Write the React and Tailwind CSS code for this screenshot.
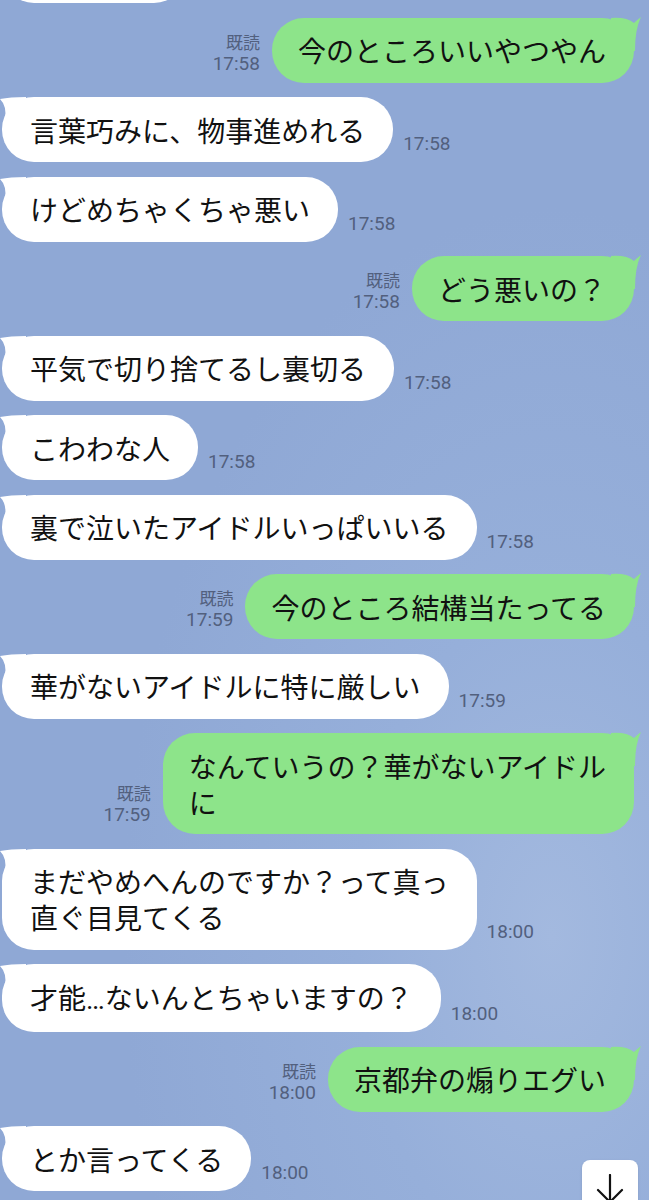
const messages = [
  { side: "in", lines: [""], time: "", cut: true },
  { side: "out", lines: ["今のところいいやつやん"], time: "17:58" },
  { side: "in", lines: ["言葉巧みに、物事進めれる"], time: "17:58" },
  { side: "in", lines: ["けどめちゃくちゃ悪い"], time: "17:58" },
  { side: "out", lines: ["どう悪いの？"], time: "17:58" },
  { side: "in", lines: ["平気で切り捨てるし裏切る"], time: "17:58" },
  { side: "in", lines: ["こわわな人"], time: "17:58" },
  { side: "in", lines: ["裏で泣いたアイドルいっぱいいる"], time: "17:58" },
  { side: "out", lines: ["今のところ結構当たってる"], time: "17:59" },
  { side: "in", lines: ["華がないアイドルに特に厳しい"], time: "17:59" },
  { side: "out", lines: ["なんていうの？華がないアイドル", "に"], time: "17:59" },
  { side: "in", lines: ["まだやめへんのですか？って真っ", "直ぐ目見てくる"], time: "18:00" },
  { side: "in", lines: ["才能", "…", "ないんとちゃいますの？"], inline: true, time: "18:00" },
  { side: "out", lines: ["京都弁の煽りエグい"], time: "18:00" },
  { side: "in", lines: ["とか言ってくる"], time: "18:00" },
];

const jp = "font-['Noto_Sans_CJK_JP',sans-serif]";

function BubbleText({ msg }) {
  if (msg.inline) {
    // iOS draws the ellipsis on the baseline, so give it a latin font
    return (
      <p className={`${jp} text-[28px] leading-[36px] text-[#111] whitespace-nowrap`}>
        {msg.lines[0]}
        <span className="font-['Roboto',sans-serif]">{msg.lines[1]}</span>
        {msg.lines[2]}
      </p>
    );
  }
  return (
    <p className={`${jp} text-[28px] leading-[36px] text-[#111] whitespace-nowrap`}>
      {msg.lines.map((l, i) => (
        <span key={i} className="block">{l}</span>
      ))}
    </p>
  );
}

function Incoming({ msg }) {
  if (msg.cut) {
    return (
      <div className="-mt-[62px] ml-[2px] h-[65px] w-[184px] rounded-[32px] bg-white" />
    );
  }
  return (
    <div className="flex items-end gap-[10px]">
      <div className="relative ml-[2px] rounded-[32px] bg-white px-[28px] py-[14.5px]">
        <svg className="absolute -left-[2px] top-0" width="26" height="30" viewBox="0 0 26 30">
          <path d="M26 0 Q10 0 0 2 Q7 9 5 22 L26 30 Z" fill="#fff" />
        </svg>
        <div className="relative">
          <BubbleText msg={msg} />
        </div>
      </div>
      <span className="mb-[7px] font-['Roboto',sans-serif] text-[19px] leading-[22px] text-[#52607e]">
        {msg.time}
      </span>
    </div>
  );
}

function Outgoing({ msg }) {
  return (
    <div className="flex items-end justify-end gap-[12px] pr-[15px]">
      <div className="mb-[8px] flex flex-col items-end leading-[22px] text-[#52607e]">
        <span className={`${jp} text-[17px]`}>既読</span>
        <span className="font-['Roboto',sans-serif] text-[19px]">{msg.time}</span>
      </div>
      <div className="relative rounded-[32px] bg-[#8de48a] pl-[26px] pr-[28px] py-[14.5px]">
        <svg className="absolute -right-[7px] -top-[1px]" width="30" height="34" viewBox="0 0 30 34">
          <path d="M0 1 Q16 0 23 6 Q26 3 30 0 Q24 12 24 34 L0 34 Z" fill="#8de48a" />
        </svg>
        <div className="relative">
          <BubbleText msg={msg} />
        </div>
      </div>
    </div>
  );
}

export default function App() {
  return (
    <div className="relative h-[1200px] w-[649px] overflow-hidden bg-[#8fa8d5] bg-[radial-gradient(ellipse_at_85%_78%,#a3b9df_0%,#96afda_25%,#8fa8d5_55%)]">
      <div className="flex flex-col gap-[14.5px]">
        {messages.map((m, i) =>
          m.side === "in" ? <Incoming key={i} msg={m} /> : <Outgoing key={i} msg={m} />
        )}
      </div>

      <button className="absolute left-[582px] top-[1160px] flex h-[60px] w-[56px] justify-center rounded-[8px] bg-white pt-[14px] shadow-sm">
        <svg width="30" height="30" viewBox="0 0 30 30" fill="none" stroke="#111" strokeWidth="2.2" strokeLinecap="round" strokeLinejoin="round">
          <path d="M15 1 V28" />
          <path d="M3 16 L15 28 L27 16" />
        </svg>
      </button>
    </div>
  );
}
